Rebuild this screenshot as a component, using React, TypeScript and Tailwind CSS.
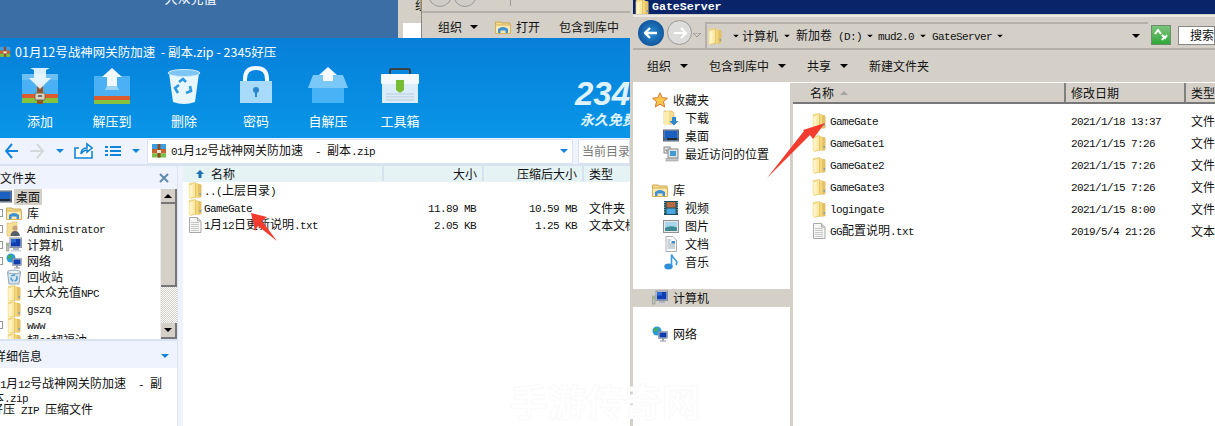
import React from "react";

const latin = "font-['Liberation_Mono',monospace] text-[11px] tracking-[-0.6px]";

function T({ s }: { s: string }) {
  const parts = s.split(/([\x20-\x7e]+)/).filter(Boolean);
  return (
    <span className="whitespace-pre">
      {parts.map((p, i) =>
        /^[\x20-\x7e]+$/.test(p) ? (
          <span key={i} className={latin}>{p}</span>
        ) : (
          <span key={i}>{p}</span>
        )
      )}
    </span>
  );
}

const Folder = ({ className = "" }: { className?: string }) => (
  <svg viewBox="0 0 14 17" width="14" height="17" className={`shrink-0 ${className}`}>
    <path d="M1 2 Q1 .8 2.5 .8 H7 L8 2 H12 Q13.5 2 13.5 3.5 V14 Q13.5 15.5 12 15.5 H2.5 Q1 15.5 1 14 Z" fill="#e3c066" />
    <path d="M.7 3 Q.7 1.6 2 1.3 L7.5 .5 V15 L2.5 16.6 Q.7 16.6 .7 15 Z" fill="#fbe9a3" />
    <path d="M2 3 L4.5 2.5 V14.5 L2 15 Z" fill="#fff4c8" />
    <path d="M8 1 L10.2 1.2 V15 L8 15.8 Z" fill="#f5d67a" />
    <path d="M12.2 11 v2" stroke="#4d94d6" strokeWidth="1" />
    <path d="M.7 3 L7.5 .5 V15 L2.5 16.6" fill="none" stroke="#d9b650" strokeWidth="0.5" />
  </svg>
);

const TextFile = () => (
  <svg viewBox="0 0 14 16" width="14" height="16" className="shrink-0">
    <path d="M1.5 .5 H9.5 L13 4 V15.5 H1.5 Z" fill="#f7f7f5" stroke="#a8a8a8" />
    <path d="M9.5 .5 V4 H13" fill="#dcdcdc" stroke="#a8a8a8" />
    <path d="M3 5.5 H11 M3 7.5 H11 M3 9.5 H11 M3 11.5 H11 M3 13.5 H11" stroke="#c8c8c8" />
  </svg>
);

const Monitor = () => (
  <svg viewBox="0 0 16 16" width="16" height="16" className="shrink-0">
    <rect x="0.5" y="2" width="15" height="11" fill="#7e95b3" stroke="#55657d" />
    <rect x="1.5" y="3" width="13" height="7" fill="#1b5fc0" />
    <rect x="1.5" y="10" width="13" height="2" fill="#222a38" />
    <rect x="2" y="10.5" width="2" height="1" fill="#4bb5e8" />
  </svg>
);
const Library = () => (
  <svg viewBox="0 0 16 16" width="16" height="16" className="shrink-0">
    <path d="M.5 3 H6 L7 4 H15 V14 H.5 Z" fill="#f5d98c" stroke="#c9a84f" />
    <path d="M.5 6 H15.5 V14.5 H.5 Z" fill="#fbe9ad" stroke="#d5b35e" />
    <path d="M3 14 V10 Q8 6 13 10 V14 H10.5 V11.5 H5.5 V14 Z" fill="#3f8fd6" />
  </svg>
);
const User = () => (
  <svg viewBox="0 0 16 16" width="16" height="16" className="shrink-0">
    <path d="M1 2 H6 V1 H11 V15 H1 Z" fill="#f6df96" stroke="#d5b35e" strokeWidth=".5" />
    <circle cx="9" cy="7" r="2.6" fill="#caa37b" />
    <path d="M4.5 15 Q5 10 9 10 Q13 10 14 15 Z" fill="#55606b" />
  </svg>
);
const Computer = () => (
  <svg viewBox="0 0 16 16" width="16" height="16" className="shrink-0">
    <rect x="0.5" y="6" width="2.5" height="8" fill="#bcc3b9" stroke="#888" strokeWidth=".5" />
    <rect x="1.2" y="7" width="1" height="2" fill="#6fbf4a" />
    <rect x="4" y="1" width="11.5" height="9.5" fill="#d2d6dc" stroke="#8b94a0" />
    <rect x="5" y="2" width="9.5" height="7.5" fill="#0f3cb0" />
    <rect x="5" y="2" width="5" height="3.5" fill="#2b6bd8" />
    <rect x="7" y="11" width="6" height="2" fill="#aeb4bb" />
    <rect x="5" y="13" width="10" height="1.5" fill="#cfd3d8" />
  </svg>
);
const Network = () => (
  <svg viewBox="0 0 16 16" width="16" height="16" className="shrink-0">
    <circle cx="5" cy="5" r="4.5" fill="#2d9ad8" />
    <path d="M2 3 Q4 1 6 2 L5 5 L2.5 6 Z M6 7 L8 6 L8 9 L6 9 Z" fill="#46b04a" />
    <rect x="6.5" y="5.5" width="9" height="7" fill="#c4cad1" stroke="#6e7680" strokeWidth=".5" />
    <rect x="7.5" y="6.5" width="7" height="5" fill="#0f3cb0" />
    <rect x="10" y="12.5" width="2" height="2" fill="#8e969f" />
    <rect x="8" y="14.5" width="6" height="1" fill="#8e969f" />
  </svg>
);
const Recycle = () => (
  <svg viewBox="0 0 16 16" width="16" height="16" className="shrink-0">
    <path d="M1.5 3 H14.5 L13 15 H3 Z" fill="#d5e3ee" stroke="#93a6b6" />
    <ellipse cx="8" cy="3" rx="6.5" ry="1.8" fill="#eef4f9" stroke="#93a6b6" />
    <circle cx="8" cy="9" r="3" fill="none" stroke="#4e9ad2" strokeWidth="1.6" strokeDasharray="4 1.5" />
  </svg>
);
const Star = () => (
  <svg viewBox="0 0 16 16" width="16" height="16" className="shrink-0">
    <path d="M8 .8 L10.2 5.6 L15.4 6.2 L11.5 9.7 L12.7 15 L8 12.2 L3.3 15 L4.5 9.7 L.6 6.2 L5.8 5.6 Z" fill="#f6c84c" stroke="#cf6a2a" strokeWidth=".9" />
  </svg>
);
const DownloadF = () => (
  <svg viewBox="0 0 16 16" width="16" height="16" className="shrink-0">
    <path d="M1 1 H9 L11 3 V14 H1 Z" fill="#f4dc8f" stroke="#d5b35e" strokeWidth=".6" />
    <path d="M1 2 L6 1 V15 L1 15 Z" fill="#fcedae" />
    <path d="M9 7 H13 V11 H15.5 L11 15.5 L6.5 11 H9 Z" fill="#2f86d3" />
  </svg>
);
const Recent = () => (
  <svg viewBox="0 0 16 16" width="16" height="16" className="shrink-0">
    <rect x="1" y="1" width="6" height="6" fill="#e8e8e8" stroke="#8a8a8a" />
    <path d="M3 3 V5 H5" fill="none" stroke="#666" strokeWidth=".7" />
    <rect x="5" y="3" width="10" height="9" fill="#dfe3e6" stroke="#8a8a8a" />
    <rect x="7" y="5" width="6" height="5" fill="#3f9bd1" />
    <rect x="3" y="12.5" width="12" height="2.5" fill="#c4c8cb" stroke="#8a8a8a" strokeWidth=".5" />
  </svg>
);
const Video = () => (
  <svg viewBox="0 0 16 16" width="16" height="16" className="shrink-0">
    <rect x="1" y="1" width="14" height="14" fill="#1c4d55" />
    <rect x="3.5" y="2" width="9" height="5.5" fill="#b66a44" />
    <rect x="3.5" y="8.5" width="9" height="5.5" fill="#4aa6e0" />
    <path d="M1.8 2v12M14.2 2v12" stroke="#cfe6ea" strokeDasharray="1 1.4" />
  </svg>
);
const Picture = () => (
  <svg viewBox="0 0 16 16" width="16" height="16" className="shrink-0">
    <rect x=".5" y="2.5" width="15" height="12" fill="#e6e8e8" stroke="#8d9296" />
    <rect x="2" y="4" width="12" height="9" fill="#a7d5ea" />
    <path d="M2 10 Q7 7 14 9.5 V13 H2 Z" fill="#3f8b94" />
  </svg>
);
const Doc = () => (
  <svg viewBox="0 0 16 16" width="16" height="16" className="shrink-0">
    <path d="M3 .5 H10 L13.5 4 V15.5 H3 Z" fill="#fbfbfb" stroke="#a7b0b8" />
    <path d="M4.5 4 H8 M4.5 6 H7 M4.5 8 H12 M4.5 10 H12 M4.5 12 H12" stroke="#9aa7b2" />
    <rect x="8.5" y="5" width="3.5" height="2.5" fill="#3e92d0" />
  </svg>
);
const Music = () => (
  <svg viewBox="0 0 16 16" width="16" height="16" className="shrink-0">
    <ellipse cx="5.5" cy="12.5" rx="4.2" ry="3" fill="#2f8fd6" />
    <path d="M8.5 12 V.5 Q10 4 13 6.5 Q14.5 8.5 13 11" fill="none" stroke="#3c9ae0" strokeWidth="1.6" />
  </svg>
);

const Caret = ({ c = "#000", className = "" }: { c?: string; className?: string }) => (
  <svg viewBox="0 0 8 4" width="8" height="4" className={`shrink-0 ${className}`}>
    <path d="M0 0 H8 L4 4 Z" fill={c} />
  </svg>
);

const Pkg = () => (
  <svg viewBox="0 0 16 16" width="16" height="16" className="shrink-0">
    <path d="M1 1 H15 V6 H1 Z" fill="#3c9ee6" />
    <rect x="1" y="6" width="14" height="4.5" fill="#c8652f" />
    <rect x="1" y="10.5" width="14" height="4" fill="#7cbf46" />
    <rect x="6.5" y="1" width="3" height="13.5" fill="#8c4f24" />
    <rect x="6" y="7" width="4" height="3" fill="#e9e6d8" />
  </svg>
);

const IconAdd = () => (
  <svg viewBox="0 0 40 40" width="40" height="40">
    <path d="M2 8 H38 V33 H2 Z" fill="#4cb1f4" />
    <path d="M2 8 H38 V14 H2 Z" fill="#6cc0f6" />
    <rect x="2" y="28" width="36" height="4" fill="#dc5a2c" />
    <rect x="2" y="32" width="36" height="5" fill="#85c33f" />
    <rect x="17" y="18" width="6" height="20" fill="#9a5224" />
    <path d="M10 2 H30 L26 4 V12 L31 12 L20 23 L9 12 H14 V4 Z" fill="#eef8ff" opacity=".92" />
    <rect x="15" y="27" width="10" height="7" rx="1" fill="#d9d2c2" stroke="#7a6a56" />
    <rect x="18" y="29" width="4" height="2" fill="#7a6a56" />
  </svg>
);
const IconExtract = () => (
  <svg viewBox="0 0 40 40" width="40" height="40">
    <path d="M2 10 H38 V30 H2 Z" fill="#4cb1f4" />
    <rect x="2" y="30" width="36" height="4" fill="#dc5a2c" />
    <rect x="2" y="34" width="36" height="4" fill="#85c33f" />
    <path d="M20 2 L30 11 H25 V20 H15 V11 H10 Z" fill="#f1f9ff" />
    <path d="M15 20 H25 L27 24 H13 Z" fill="#9bd3f8" />
  </svg>
);
const IconBin = () => (
  <svg viewBox="0 0 40 40" width="40" height="40">
    <path d="M5 7 L9 36 Q20 40 31 36 L35 7 Z" fill="#e8f6ff" />
    <ellipse cx="20" cy="7" rx="16" ry="3.5" fill="#7dc6f4" stroke="#cfeaff" />
    <path d="M15 16 L19 13 L22 16 M26 20 L27 25 L22 27 M14 27 L11 22 L15 19" fill="none" stroke="#2d99e2" strokeWidth="2.6" />
  </svg>
);
const IconLock = () => (
  <svg viewBox="0 0 40 40" width="40" height="40">
    <path d="M9 17 V13 Q9 2 20 2 Q31 2 31 13 V17" fill="none" stroke="#f2f9ff" strokeWidth="4" />
    <rect x="4" y="15" width="32" height="22" fill="#a8dafb" />
    <circle cx="20" cy="24" r="3" fill="#2b86cf" />
    <rect x="19" y="25" width="2" height="6" fill="#2b86cf" />
  </svg>
);
const IconSelf = () => (
  <svg viewBox="0 0 40 40" width="40" height="40">
    <path d="M0 22 L5 9 H35 L40 22 Z" fill="#7ac8f8" />
    <rect x="4" y="22" width="32" height="15" fill="#47b2f6" />
    <path d="M20 1 L29 9 H25 V15 H15 V9 H11 Z" fill="#f4faff" />
  </svg>
);
const IconTool = () => (
  <svg viewBox="0 0 40 40" width="40" height="40">
    <path d="M10 9 V4 Q10 3 12 3 H28 Q30 3 30 4 V9" fill="none" stroke="#3b3f46" strokeWidth="2" />
    <rect x="1" y="8" width="38" height="10" rx="1" fill="#f3f9fd" />
    <rect x="2" y="18" width="36" height="19" fill="#dcecf8" />
    <path d="M6 28 H34 M6 31 H34 M6 34 H34" stroke="#b5cbdc" />
    <path d="M16 14 H24 V24 L20 27 L16 24 Z" fill="#76bd35" />
  </svg>
);

const toolbar = [
  ["添加", <IconAdd />],
  ["解压到", <IconExtract />],
  ["删除", <IconBin />],
  ["密码", <IconLock />],
  ["自解压", <IconSelf />],
  ["工具箱", <IconTool />],
] as const;

const leftTree: [string, React.ReactNode, boolean][] = [
  ["库", <Library />, true],
  ["Administrator", <User />, true],
  ["计算机", <Computer />, true],
  ["网络", <Network />, true],
  ["回收站", <Recycle />, false],
  ["1大众充值NPC", <Folder />, false],
  ["gszq", <Folder />, false],
  ["www", <Folder />, true],
  ["韧90韧福油", <Folder />, false],
];

const rightRows = [
  ["GameGate", "2021/1/18 13:37"],
  ["GameGate1", "2021/1/15 7:26"],
  ["GameGate2", "2021/1/15 7:26"],
  ["GameGate3", "2021/1/15 7:26"],
  ["logingate", "2021/1/15 8:00"],
];

function NavRow({ icon, label, indent, active }: { icon: React.ReactNode; label: string; indent?: boolean; active?: boolean }) {
  return (
    <div className={`flex h-[18px] items-center gap-[5px] ${indent ? "pl-[30px]" : "pl-[19px]"} ${active ? "bg-[#d4d0c8]" : ""}`}>
      {icon}
      <span className={indent ? "ml-[1px]" : ""}>{label}</span>
    </div>
  );
}

function ColHead({ w, label }: { w: string; label: string }) {
  return (
    <div className={`${w} flex h-full shrink-0 items-center justify-end border-r-2 border-[#d6e2ee] pr-[5px]`}>
      {label}
    </div>
  );
}

export default function App() {
  return (
    <div className="relative h-[426px] w-[1215px] overflow-hidden bg-white font-['Noto_Sans_CJK_SC',sans-serif] text-[12px] leading-none text-[#111]">
      {/* desktop */}
      <div className="absolute left-0 top-0 h-[38px] w-[398px] overflow-hidden bg-[#3a6ea5]">
        <div className="mt-[-8px] pl-[160px] text-[13px] leading-[12px] text-white">-大众充值-</div>
      </div>

      {/* window behind */}
      <div className="absolute left-[398px] top-0 flex h-[38px] w-[234px] bg-[#d4d0c8]">
        <div className="flex w-[24px] shrink-0 flex-col border-r border-[#888] pl-[5px]">
          <div className="ml-[12px] h-[23px] overflow-hidden text-[12px] leading-[10px]">组</div>
          <div className="flex-1 bg-white" />
        </div>
        <div className="flex flex-1 flex-col">
          <div className="flex h-[13px] items-start gap-[1px] border-b-2 border-[#b4b0a8] pl-[6px]">
            <div className="mt-[-17px] h-[24px] w-[24px] rounded-full border border-[#999] bg-[#cfccc5]" />
            <div className="mt-[-17px] h-[24px] w-[24px] rounded-full border border-[#999] bg-[#cfccc5]" />
            <div className="ml-[17px] h-[6px] w-[16px] border-r border-[#999]" />
          </div>
          <div className="flex flex-1 items-center pl-[16px] pt-[3px] text-[12px]">
            <span>组织</span>
            <Caret className="ml-[8px]" />
            <span className="ml-[17px]"><Library /></span>
            <span className="ml-[5px]">打开</span>
            <span className="ml-[19px]">包含到库中</span>
          </div>
        </div>
      </div>

      {/* left window */}
      <div className="absolute left-[-6px] top-[38px] flex h-[388px] w-[636px] flex-col bg-[#eef3fd]">
        <div className="relative h-[100px] overflow-hidden bg-linear-to-b from-[#077fd9] to-[#0896e8] text-white">
          <div className="flex h-[28px] items-center pl-[3px] text-[12.5px]">
            <span className="mr-[2px] scale-75"><Pkg /></span>
            <span className="whitespace-pre">01月12号战神网关防加速  - 副本.zip - 2345好压</span>
          </div>
          <div className="flex pl-[10px]">
            {toolbar.map(([label, icon]) => (
              <div key={label} className="flex w-[72px] flex-col items-center">
                {icon}
                <span className="mt-[8px] text-[13px] leading-[13px]">{label}</span>
              </div>
            ))}
          </div>
          <div className="absolute right-[-21px] top-[42px] flex w-[76px] flex-col items-start">
            <span className="font-['Liberation_Sans',sans-serif] text-[33px] font-bold italic leading-[28px] text-[#dff2ff]">2345</span>
            <span className="ml-[5px] mt-[4px] whitespace-nowrap text-[14px] font-bold italic leading-[14px] text-[#dff2ff]">永久免费</span>
          </div>
        </div>

        {/* nav row */}
        <div className="flex h-[28px] shrink-0 items-center border-b-2 border-[#d8e2f0]">
          <svg viewBox="0 0 88 18" width="88" height="18" className="ml-[11px] shrink-0">
            <path d="M7 2 L1 9 L7 16 M1 9 H13" fill="none" stroke="#1185dc" strokeWidth="2" />
            <path d="M32 2 L38 9 L32 16 M38 9 H25" fill="none" stroke="#d6d8dc" strokeWidth="2" />
            <path d="M51 7 H59 L55 11 Z" fill="#1185dc" />
            <path d="M74 6 H70 V16 H87 V9 M76 12 Q76 6 82 6 V2 L87 6 L82 10 V8 Q79 8 76 12" fill="#fff" stroke="#1185dc" strokeWidth="1.6" />
          </svg>
          <svg viewBox="0 0 36 12" width="36" height="12" className="ml-[12px] shrink-0">
            <path d="M0 2 H3 M5 2 H16 M0 6 H3 M5 6 H16 M0 10 H3 M5 10 H16" stroke="#1185dc" strokeWidth="2" />
            <path d="M27 4 H35 L31 8 Z" fill="#1185dc" />
          </svg>
          <div className="ml-[6px] flex h-[25px] w-[426px] shrink-0 items-center rounded-[2px] border border-[#d9e2f2] bg-white pl-[3px]">
            <Pkg />
            <span className="ml-[4px]"><T s="01月12号战神网关防加速  - 副本.zip" /></span>
            <Caret c="#1185dc" className="ml-auto mr-[4px]" />
          </div>
          <div className="ml-[5px] flex h-[25px] min-w-0 flex-1 items-center overflow-hidden whitespace-nowrap border border-[#d9e2f2] bg-white pl-[3px] text-[#777]">
            当前目录
          </div>
        </div>

        {/* body */}
        <div className="flex min-h-0 flex-1">
          <div className="flex w-[184px] shrink-0 flex-col border-r border-[#dbe4f0]">
            <div className="flex h-[23px] shrink-0 items-center">
              <span className="pl-[6px] text-[12px]">文件夹</span>
              <svg viewBox="0 0 10 10" width="10" height="10" className="ml-auto mr-[8px]">
                <path d="M1 1 L9 9 M9 1 L1 9" stroke="#5f88ad" strokeWidth="2" />
              </svg>
            </div>
            <div className="flex h-[150px] shrink-0 overflow-hidden bg-white">
              <div className="min-w-0 flex-1 overflow-hidden">
                <div className="flex h-4 items-center pl-[2px]">
                  <Monitor />
                  <span className="ml-[2px] flex h-[16px] items-center bg-[#d4d0c8] px-[2px]">桌面</span>
                </div>
                {leftTree.map(([label, icon, box]) => (
                  <div key={label} className="flex h-4 items-center">
                    <div className="flex w-[12px] shrink-0 justify-end">
                      {box && <div className="mr-[3px] h-[8px] w-[8px] border border-[#999]" />}
                    </div>
                    <div className="flex w-[16px] justify-center">{icon}</div>
                    <span className="ml-[5px]"><T s={label} /></span>
                  </div>
                ))}
              </div>
              <div className="flex w-[17px] shrink-0 flex-col border-l border-[#eee] bg-[repeating-conic-gradient(#d4d0c8_0_25%,#fff_0_50%)] bg-[length:2px_2px]">
                <div className="flex h-[15px] shrink-0 items-center justify-center border-b-2 border-r-2 border-[#777] bg-[#d4d0c8]">
                  <svg viewBox="0 0 8 4" width="8" height="4"><path d="M0 4 H8 L4 0 Z" /></svg>
                </div>
                <div className="h-[83px] shrink-0 border-b-2 border-r-2 border-[#777] bg-[#d4d0c8]" />
                <div className="mt-auto flex h-[16px] shrink-0 items-center justify-center border-b-2 border-r-2 border-[#777] bg-[#d4d0c8]">
                  <Caret />
                </div>
              </div>
            </div>
            <div className="flex h-[29px] shrink-0 items-center border-t-2 border-[#d8e2f0] pt-[3px]">
              <span className="text-[12px]">详细信息</span>
              <Caret c="#1185dc" className="ml-auto mr-[8px]" />
            </div>
            <div className="flex-1 overflow-hidden bg-white pt-[9px]">
              <div className="h-[15px] pl-[6px]"><T s="1月12号战神网关防加速  - 副" /></div>
              <div className="ml-[-2px] h-[10px] leading-[10px]"><T s="本.zip" /></div>
              <div className="ml-[-3px] h-[14px] leading-[14px]"><T s="好压 ZIP 压缩文件" /></div>
            </div>
          </div>
          <div className="w-[5px] shrink-0 bg-[#eef3fd]" />
          <div className="flex min-w-0 flex-1 flex-col bg-white">
            <div className="flex h-[16px] shrink-0 items-center bg-[#e5f3f5] pb-[1px]">
              <div className="flex h-full w-[201px] shrink-0 items-center border-r-2 border-[#d6e2ee] pl-[13px]">
                <svg viewBox="0 0 8 8" width="8" height="8"><path d="M4 0 L8 4 H5.5 V8 H2.5 V4 H0 Z" fill="#1b6fb5" /></svg>
                <span className="ml-[7px]">名称</span>
              </div>
              <ColHead w="w-[100px]" label="大小" />
              <ColHead w="w-[100px]" label="压缩后大小" />
              <div className="pl-[5px]">类型</div>
            </div>
            <div className="flex h-[17px] items-center pl-[5px]">
              <Folder />
              <span className="ml-[2px]"><T s="..(上层目录)" /></span>
            </div>
            <div className="flex h-[17px] items-center pl-[5px]">
              <div className="flex w-[195px] items-center">
                <Folder />
                <span className="ml-[2px]"><T s="GameGate" /></span>
              </div>
              <div className="w-[93px] text-right"><T s="11.89 MB" /></div>
              <div className="w-[101px] text-right"><T s="10.59 MB" /></div>
              <div className="ml-[12px] whitespace-nowrap">文件夹</div>
            </div>
            <div className="flex h-[17px] items-center pl-[5px]">
              <div className="flex w-[195px] items-center">
                <TextFile />
                <span className="ml-[2px]"><T s="1月12日更新说明.txt" /></span>
              </div>
              <div className="w-[93px] text-right"><T s="2.05 KB" /></div>
              <div className="w-[101px] text-right"><T s="1.25 KB" /></div>
              <div className="ml-[12px] w-[41px] overflow-hidden whitespace-nowrap">文本文档</div>
            </div>
          </div>
        </div>
      </div>

      {/* right window */}
      <div className="absolute left-[630px] top-0 flex h-[426px] w-[585px] flex-col border-l-[3px] border-[#d4d0c8] bg-[#d4d0c8]">
        <div className="flex h-[14px] shrink-0 items-center gap-[3px] overflow-hidden bg-[#0a246a] pl-[2px] text-white">
          <Folder />
          <span className="font-['Liberation_Mono',monospace] text-[11.6px] font-bold">GateServer</span>
        </div>
        <div className="h-[8px] shrink-0 pt-[1px]">
          <div className="h-[2px] bg-[#ebe9e4]" />
        </div>
        <div className="flex h-[28px] shrink-0 items-center border-b-2 border-[#b4b0a8]">
          <div className="z-10 ml-[5px] mt-[-5px] flex h-[26px] w-[26px] shrink-0 items-center justify-center rounded-full bg-radial from-[#2a8fd6] to-[#0a3f88]">
            <svg viewBox="0 0 14 12" width="14" height="12"><path d="M6 1 L1 6 L6 11 M1 6 H13" fill="none" stroke="#fff" strokeWidth="2.4" /></svg>
          </div>
          <div className="z-10 ml-[3px] mt-[-5px] flex h-[25px] w-[25px] shrink-0 items-center justify-center rounded-full border border-[#9a9a9a] bg-[#dcdcda]">
            <svg viewBox="0 0 14 12" width="14" height="12"><path d="M8 1 L13 6 L8 11 M13 6 H1" fill="none" stroke="#fff" strokeWidth="2.2" /></svg>
          </div>
          <svg viewBox="0 0 8 4" width="8" height="4" className="ml-[1px] shrink-0"><path d="M0 0 H8 L4 4 Z" fill="none" stroke="#888" strokeWidth=".8" /></svg>
          <div className="ml-[4px] flex h-[27px] w-[443px] shrink-0 items-center border-l-2 border-t-2 border-[#b4b0a8] pl-[1px]">
            <Folder />
            <Caret className="ml-[10px] scale-75" />
            <span className="ml-[2px]">计算机</span>
            <Caret className="ml-[5px] scale-75" />
            <span className="ml-[5px] whitespace-pre"><T s="新加卷 (D:)" /></span>
            <Caret className="ml-[4px] scale-75" />
            <span className="ml-[4px]"><T s="mud2.0" /></span>
            <Caret className="ml-[5px] scale-75" />
            <span className="ml-[5px]"><T s="GateServer" /></span>
            <Caret className="ml-[4px] scale-75" />
            <Caret className="ml-auto mr-[8px]" />
          </div>
          <div className="ml-[3px] flex h-[20px] w-[20px] shrink-0 items-center justify-center border border-[#6c8e6c] bg-linear-to-b from-[#7bc47b] to-[#2aa838]">
            <svg viewBox="0 0 14 12" width="14" height="12"><path d="M1 5 L4 1 L7 5 M11 7 L8 11 M13 6 L11 9 L8 6" fill="none" stroke="#fff" strokeWidth="2" /></svg>
          </div>
          <div className="ml-[7px] flex h-[19px] flex-1 items-center border border-[#888] bg-white pl-[11px]">搜索</div>
        </div>
        <div className="flex h-[32px] shrink-0 items-center text-[12px]">
          <span className="ml-[14px]">组织</span>
          <Caret className="ml-[9px]" />
          <span className="ml-[21px]">包含到库中</span>
          <Caret className="ml-[9px]" />
          <span className="ml-[21px]">共享</span>
          <Caret className="ml-[9px]" />
          <span className="ml-[21px]">新建文件夹</span>
        </div>
        <div className="flex min-h-0 flex-1 border-t border-white">
          <div className="w-[157px] shrink-0 bg-white pt-[8px]">
            <NavRow icon={<Star />} label="收藏夹" />
            <NavRow icon={<DownloadF />} label="下载" indent />
            <NavRow icon={<Monitor />} label="桌面" indent />
            <NavRow icon={<Recent />} label="最近访问的位置" indent />
            <div className="h-[18px]" />
            <NavRow icon={<Library />} label="库" />
            <NavRow icon={<Video />} label="视频" indent />
            <NavRow icon={<Picture />} label="图片" indent />
            <NavRow icon={<Doc />} label="文档" indent />
            <NavRow icon={<Music />} label="音乐" indent />
            <div className="h-[18px]" />
            <NavRow icon={<Computer />} label="计算机" active />
            <div className="h-[18px]" />
            <NavRow icon={<Network />} label="网络" />
          </div>
          <div className="w-[3px] shrink-0" />
          <div className="flex min-w-0 flex-1 flex-col bg-white">
            <div className="flex h-[21px] shrink-0 border-b-2 border-[#777] bg-[#d4d0c8]">
              <div className="flex h-full w-[273px] shrink-0 items-center border-r-2 border-[#808080] pl-[17px]">
                <span>名称</span>
                <svg viewBox="0 0 8 4" width="8" height="4" className="ml-[6px]"><path d="M0 4 H8 L4 0 Z" fill="#a6a6a0" /></svg>
              </div>
              <div className="flex h-full w-[120px] shrink-0 items-center border-r-2 border-[#808080] pl-[5px]">修改日期</div>
              <div className="flex h-full items-center pl-[5px]">类型</div>
            </div>
            <div className="pt-[6px]">
              {rightRows.map(([name, date]) => (
                <div key={name} className="flex h-[22px] items-center pl-[19px]">
                  <div className="flex w-[259px] items-center gap-[4px]">
                    <Folder />
                    <T s={name} />
                  </div>
                  <div className="w-[120px]"><T s={date} /></div>
                  <div>文件</div>
                </div>
              ))}
              <div className="flex h-[22px] items-center pl-[19px]">
                <div className="flex w-[259px] items-center gap-[4px]">
                  <TextFile />
                  <T s="GG配置说明.txt" />
                </div>
                <div className="w-[120px]"><T s="2019/5/4 21:26" /></div>
                <div>文本</div>
              </div>
            </div>
          </div>
        </div>
      </div>

      {/* arrows */}
      <svg viewBox="0 0 1215 426" width="1215" height="426" className="pointer-events-none absolute left-0 top-0">
        <path d="M251 213 L267 217 L262 221 L277 241 L258 226 L255 231 Z" fill="#f33b2e" />
        <path d="M825 123 L813 139 L810 135 L767 178 L804 131 L803 130 Z" fill="#f33b2e" />
      </svg>

      {/* watermark */}
      <div className="pointer-events-none absolute left-[510px] top-[380px] whitespace-nowrap text-[38px] font-bold leading-[40px] text-white [-webkit-text-stroke:1px_#fafafa]">
        手游传奇网
      </div>
    </div>
  );
}
